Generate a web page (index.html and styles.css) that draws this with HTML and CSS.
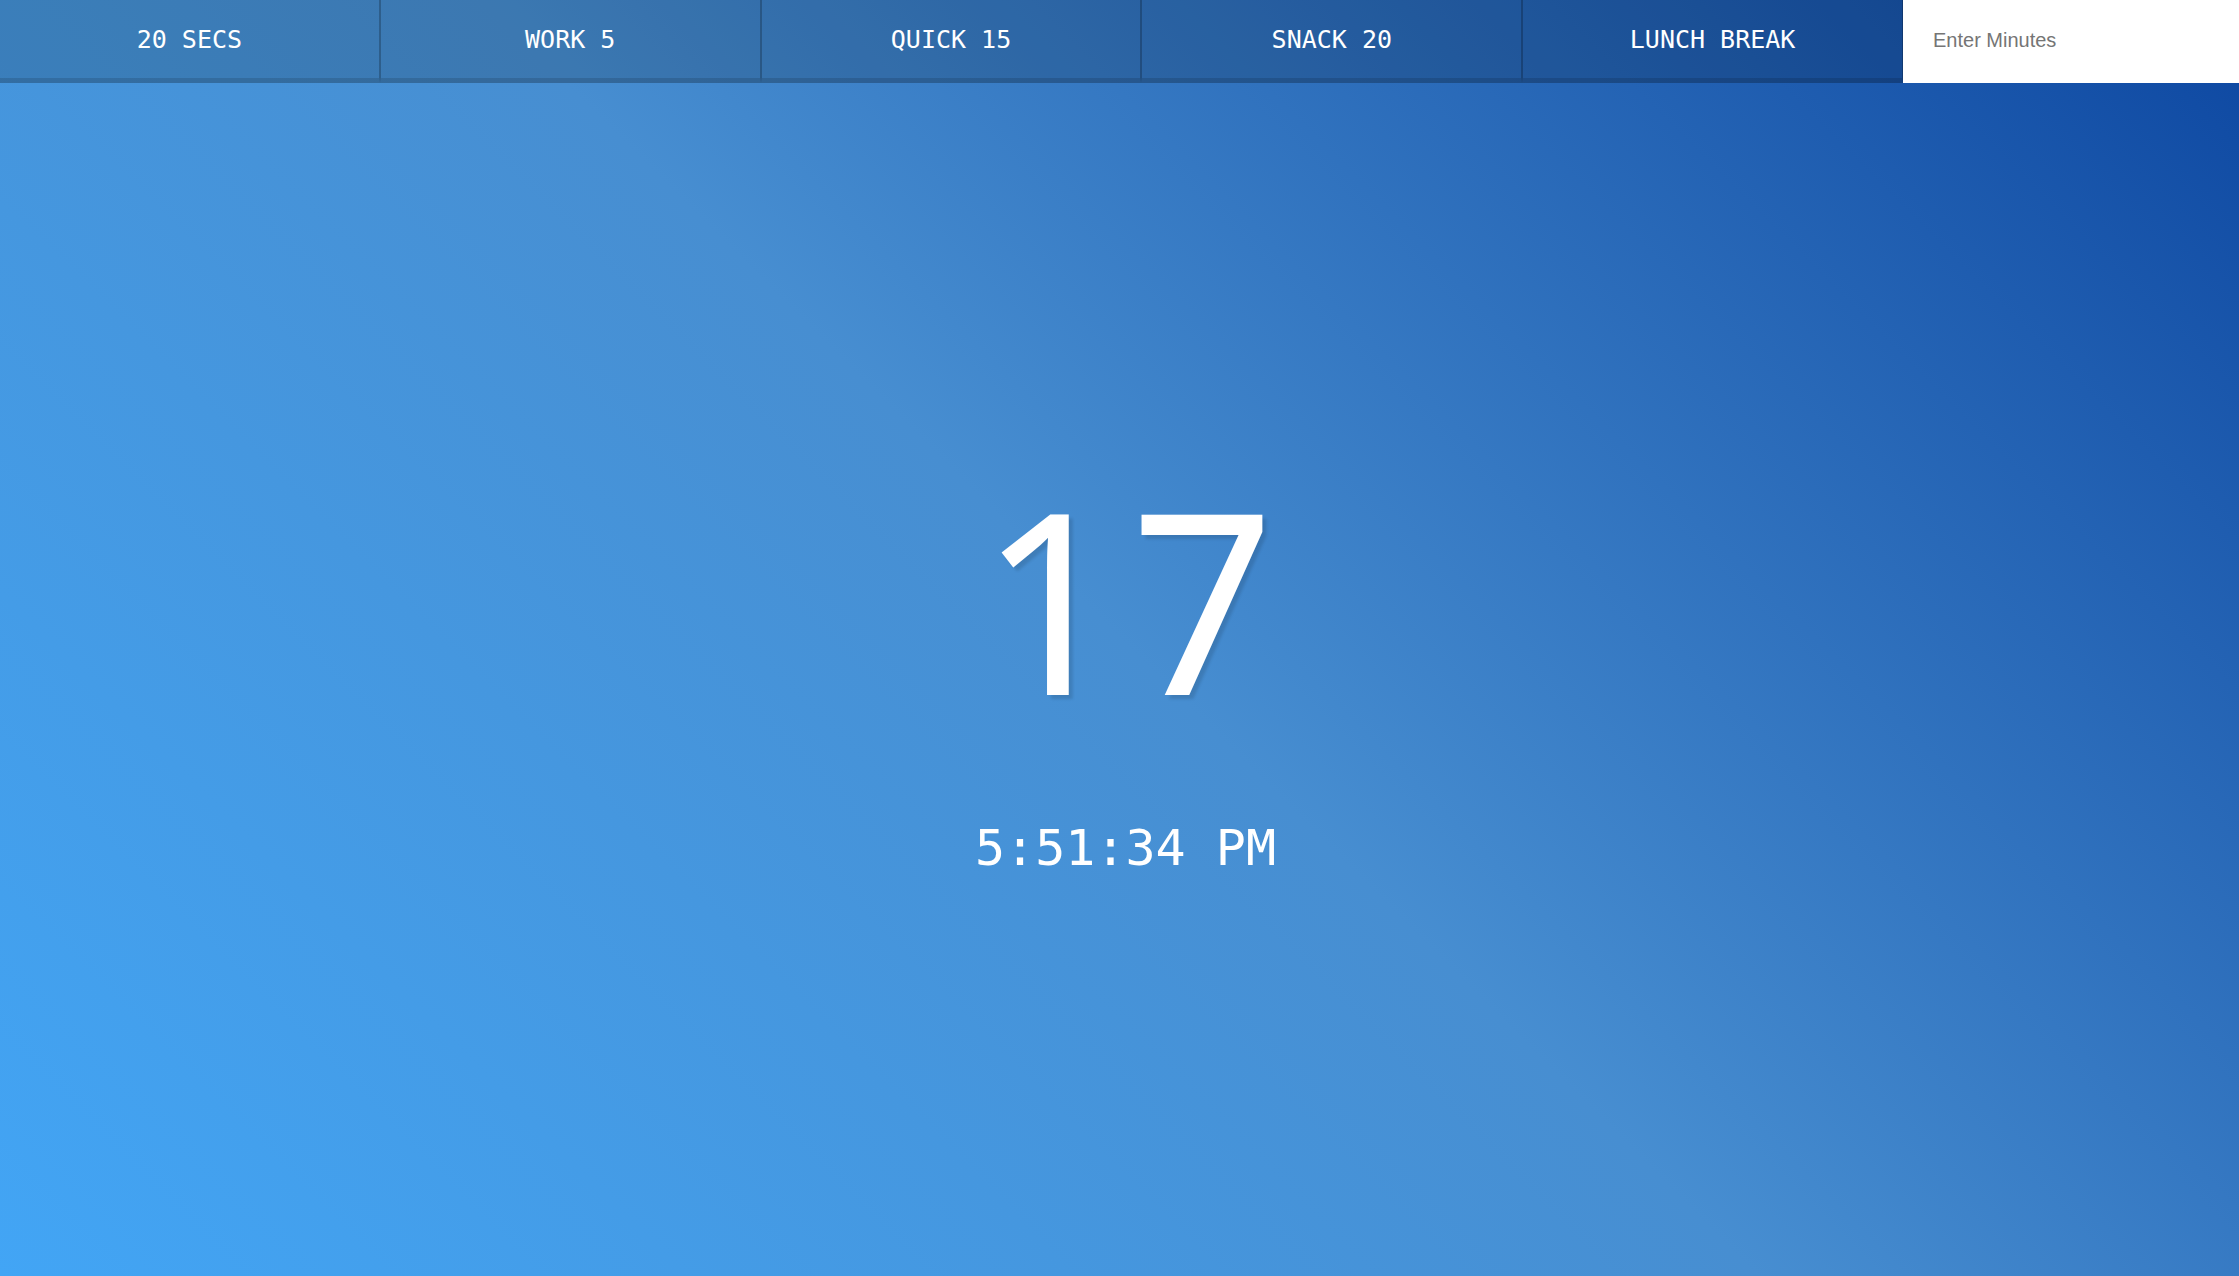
FILE: index.html
```html
<!DOCTYPE html>
<html lang="en">
<head>
<meta charset="utf-8">
<title>Timer</title>
<link rel="stylesheet" href="styles.css">
</head>
<body>
<div class="timer">
  <nav class="controls">
    <button class="btn">20 SECS</button>
    <button class="btn">WORK 5</button>
    <button class="btn">QUICK 15</button>
    <button class="btn">SNACK 20</button>
    <button class="btn">LUNCH BREAK</button>
    <form class="custom">
      <input class="minutes" type="text" name="minutes" placeholder="Enter Minutes">
    </form>
  </nav>
  <main class="display">
    <h1 class="time-left">17</h1>
    <p class="end-time">5:51:34 PM</p>
  </main>
</div>
</body>
</html>
```
FILE: styles.css
```css
html, body {
  margin: 0;
  padding: 0;
  height: 100%;
}
body {
  background: linear-gradient(45deg, #42a5f5 0%, #478ed1 50%, #0d47a1 100%);
  font-family: "DejaVu Sans Mono", monospace;
  color: #fff;
  overflow: hidden;
}
.timer {
  display: flex;
  flex-direction: column;
  height: 100%;
}
.controls {
  display: flex;
  height: 83px;
}
.btn {
  flex: 1;
  background: rgba(0, 0, 0, 0.15);
  border: 0;
  border-left: 1px solid rgba(0, 0, 0, 0.22);
  border-right: 1px solid rgba(0, 0, 0, 0.22);
  border-bottom: 5px solid rgba(0, 0, 0, 0.13);
  color: #fff;
  font-family: "DejaVu Sans Mono", monospace;
  font-size: 25px;
  padding: 0;
  margin: 0;
  cursor: pointer;
}
.btn:first-child {
  border-left: 0;
}
.custom {
  width: 336px;
  margin: 0;
  display: flex;
}
.minutes {
  flex: 1;
  width: 100%;
  border: 0;
  margin: 0;
  padding: 0 0 2px 30px;
  background: #fff;
  font-family: "Liberation Sans", Arial, sans-serif;
  font-size: 20px;
  color: #333;
  outline: none;
}
.minutes::placeholder {
  color: #757575;
}
.display {
  flex: 1;
  display: flex;
  flex-direction: column;
  align-items: center;
  padding-top: 389px;
}
.time-left {
  margin: 0;
  font-family: "Noto Sans", sans-serif;
  font-weight: 400;
  font-size: 252px;
  line-height: 1;
  letter-spacing: 7px;
  padding-left: 22px;
  text-shadow: 4px 4px 3px rgba(0, 0, 0, 0.12);
}
.end-time {
  margin: 99px 0 0;
  font-size: 50px;
  line-height: 1;
  padding-left: 12px;
}
```
